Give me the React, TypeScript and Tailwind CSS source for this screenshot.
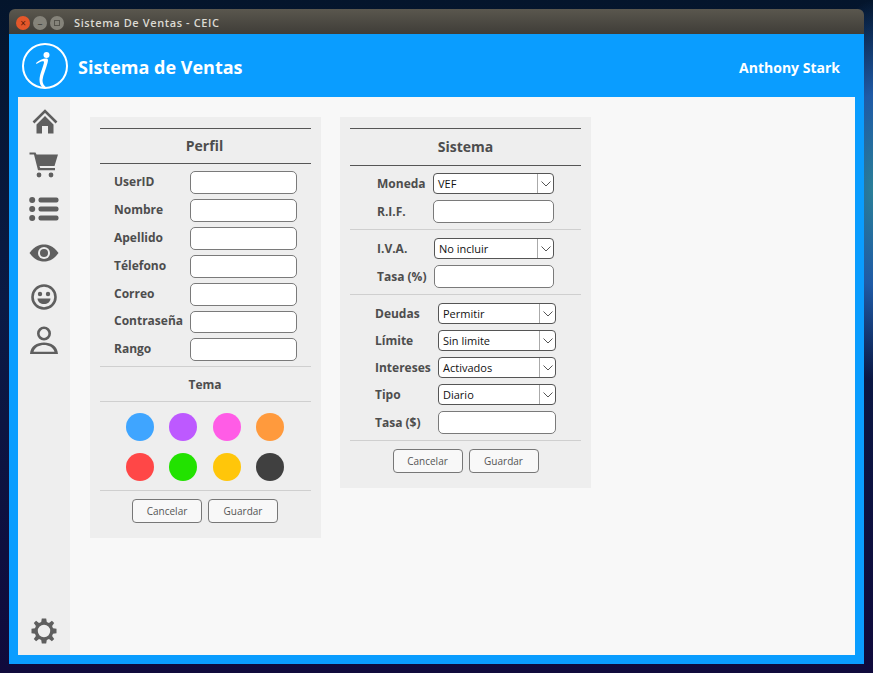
const font = "font-['Open_Sans','Noto_Sans',sans-serif]";

function Chevron() {
  return (
    <svg width="10" height="6" viewBox="0 0 10 6" fill="none" stroke="#555" strokeWidth="1">
      <path d="M0.5 0.5 L5 5 L9.5 0.5" />
    </svg>
  );
}

function Field({ className = "" }: { className?: string }) {
  return <input type="text" className={`rounded-[5px] border border-[#7a7a7a] bg-white ${className}`} />;
}

function Select({ value, className = "" }: { value: string; className?: string }) {
  return (
    <div className={`flex h-[21px] items-stretch rounded-[4px] border border-[#555] bg-white ${className}`}>
      <span className="flex-1 pl-1 text-[11px] leading-[19px] text-[#111]">{value}</span>
      <span className="flex w-4 items-center justify-center border-l border-[#aaa]">
        <Chevron />
      </span>
    </div>
  );
}

function Btn({ label }: { label: string }) {
  return (
    <button className="h-6 w-[70px] rounded-[4px] border border-[#777] bg-[#f8f8f8] pt-[1px] text-[10px] text-[#555]">
      {label}
    </button>
  );
}

function Label({ text, className = "" }: { text: string; className?: string }) {
  return <span className={`text-[12px] font-bold text-[#4d4d4d] ${className}`}>{text}</span>;
}

const perfilRows = ["UserID", "Nombre", "Apellido", "Télefono", "Correo", "Contraseña", "Rango"];
const temas = ["#3fa5ff", "#bd59ff", "#ff5ce6", "#ff9a3d", "#ff4747", "#22e200", "#ffc60a", "#404040"];
const deudas = [
  { label: "Deudas", value: "Permitir" },
  { label: "Límite", value: "Sin limite" },
  { label: "Intereses", value: "Activados" },
  { label: "Tipo", value: "Diario" },
];

function Sidebar() {
  return (
    <aside className="flex w-[52px] shrink-0 flex-col items-center bg-[#eeeeee] pt-[12px] pb-[11px]">
      {/* casa */}
      <svg width="26" height="26" viewBox="0 0 26 26" fill="#5f5f5f" className="ml-[1px]">
        <path d="M1.5 13.5 L13 2 L24.5 13.5" fill="none" stroke="#5f5f5f" strokeWidth="2.6" />
        <path d="M4.5 15.5 L13 7 L21.5 15.5 V24.5 H16 V17 H10 V24.5 H4.5 Z" />
      </svg>
      {/* carrito */}
      <svg width="30" height="26" viewBox="0 0 30 26" fill="#5f5f5f" className="mt-[17px]">
        <path d="M0.5 0.5 H6.5 L7.5 2.5 H29 L25.5 14 H10.5 L11.2 16 H26 V18.2 H9 L5 2.5 H0.5 Z" />
        <circle cx="10" cy="23" r="2.4" />
        <circle cx="22" cy="23" r="2.4" />
      </svg>
      {/* lista */}
      <svg width="30" height="26" viewBox="0 0 30 26" fill="#5f5f5f" className="mt-[18px]">
        <circle cx="3.2" cy="4" r="3" />
        <circle cx="3.2" cy="13" r="3" />
        <circle cx="3.2" cy="22" r="3" />
        <rect x="9.5" y="1.5" width="20" height="5" rx="2" />
        <rect x="9.5" y="10.5" width="20" height="5" rx="2" />
        <rect x="9.5" y="19.5" width="20" height="5" rx="2" />
      </svg>
      {/* ojo */}
      <svg width="30" height="18" viewBox="0 0 30 18" className="mt-[22px]">
        <path d="M0.5 9 C6 1.5 11 0.5 15 0.5 C19 0.5 24 1.5 29.5 9 C24 16.5 19 17.5 15 17.5 C11 17.5 6 16.5 0.5 9 Z" fill="#5f5f5f" />
        <circle cx="15" cy="9" r="6" fill="#eeeeee" />
        <circle cx="15" cy="9" r="4" fill="#5f5f5f" />
      </svg>
      {/* cara */}
      <svg width="26" height="26" viewBox="0 0 26 26" className="mt-[22px]">
        <circle cx="13" cy="13" r="11.5" fill="none" stroke="#5f5f5f" strokeWidth="2.6" />
        <circle cx="9" cy="10" r="2.2" fill="#5f5f5f" />
        <circle cx="17" cy="10" r="2.2" fill="#5f5f5f" />
        <path d="M6.5 14.5 H19.5 C19 18.5 16.5 20 13 20 C9.5 20 7 18.5 6.5 14.5 Z" fill="#5f5f5f" />
      </svg>
      {/* usuario */}
      <svg width="30" height="30" viewBox="0 0 30 30" className="mt-[16px]">
        <circle cx="15" cy="7.5" r="5.7" fill="none" stroke="#5f5f5f" strokeWidth="2.6" />
        <path d="M1 28 C1.5 20 8 16.5 15 16.5 C22 16.5 28.5 20 29 28 Z M4.5 25.7 H25.5 C24 21 19.5 19 15 19 C10.5 19 6 21 4.5 25.7 Z" fill="#5f5f5f" fillRule="evenodd" />
      </svg>
      {/* engranaje */}
      <svg width="26" height="26" viewBox="0 0 26 26" className="mt-auto" fill="#5f5f5f">
        <path
          fillRule="evenodd"
          d="M10.8 0.5 H15.2 L15.8 4 L18 4.9 L20.9 2.8 L23.2 5.1 L21.1 8 L22 10.2 L25.5 10.8 V15.2 L22 15.8 L21.1 18 L23.2 20.9 L20.9 23.2 L18 21.1 L15.8 22 L15.2 25.5 H10.8 L10.2 22 L8 21.1 L5.1 23.2 L2.8 20.9 L4.9 18 L4 15.8 L0.5 15.2 V10.8 L4 10.2 L4.9 8 L2.8 5.1 L5.1 2.8 L8 4.9 L10.2 4 Z M13 6.8 A6.2 6.2 0 1 0 13 19.2 A6.2 6.2 0 1 0 13 6.8 Z"
        />
      </svg>
    </aside>
  );
}

function Perfil() {
  return (
    <section className="h-[421px] w-[231px] shrink-0 bg-[#eeeeee] px-[10px] pt-[11px]">
      <div className="flex h-[36px] items-center justify-center border-y border-[#555] pr-[2px] pb-[2px] text-[14px] font-bold text-[#4d4d4d]">
        Perfil
      </div>
      <div className="flex flex-col gap-[5px] pt-[7px] pb-[5px] pl-[14px] pr-[14px]">
        {perfilRows.map((r) => (
          <div key={r} className="flex items-center justify-between">
            <Label text={r} className="pb-[2px]" />
            <Field className={r === "Contraseña" ? "h-[22px] w-[107px]" : "h-[23px] w-[107px]"} />
          </div>
        ))}
      </div>
      <div className="flex h-[36px] items-center justify-center border-y border-[#cfcfcf] pr-[1px] pt-[1px] text-[12px] font-bold text-[#4d4d4d]">
        Tema
      </div>
      <div className="grid h-[89px] grid-cols-[repeat(4,28px)] content-center justify-between gap-y-[12px] border-b border-[#cfcfcf] pt-[1px] pl-[26px] pr-[27px]">
        {temas.map((c) => (
          <span key={c} className="size-[28px] rounded-full" style={{ backgroundColor: c }} />
        ))}
      </div>
      <div className="flex justify-center gap-[6px] pt-[8px] pr-[1px]">
        <Btn label="Cancelar" />
        <Btn label="Guardar" />
      </div>
    </section>
  );
}

function Sistema() {
  return (
    <section className="h-[371px] w-[251px] shrink-0 bg-[#eeeeee] px-[10px] pt-[11px]">
      <div className="flex h-[38px] items-center justify-center border-y border-[#555] pb-[2px] text-[14px] font-bold text-[#4d4d4d]">
        Sistema
      </div>
      <div className="flex flex-col gap-[6px] border-b border-[#cfcfcf] pt-[7px] pb-[6px] pl-[27px] pr-[27px]">
        <div className="flex items-center justify-between">
          <Label text="Moneda" />
          <Select value="VEF" className="w-[121px]" />
        </div>
        <div className="flex items-center justify-between">
          <Label text="R.I.F." />
          <Field className="h-[23px] w-[121px]" />
        </div>
      </div>
      <div className="flex flex-col gap-[6px] border-b border-[#cfcfcf] pt-[8px] pb-[6px] pl-[27px] pr-[27px]">
        <div className="flex items-center justify-between">
          <Label text="I.V.A." />
          <Select value="No incluir" className="w-[120px]" />
        </div>
        <div className="flex items-center justify-between">
          <Label text="Tasa (%)" />
          <Field className="h-[23px] w-[120px]" />
        </div>
      </div>
      <div className="flex flex-col gap-[6px] border-b border-[#cfcfcf] pt-[8px] pb-[6px] pl-[25px] pr-[25px]">
        {deudas.map((d) => (
          <div key={d.label} className="flex items-center justify-between">
            <Label text={d.label} />
            <Select value={d.value} className="w-[118px]" />
          </div>
        ))}
        <div className="flex items-center justify-between">
          <Label text="Tasa ($)" />
          <Field className="h-[23px] w-[118px]" />
        </div>
      </div>
      <div className="flex justify-center gap-[6px] pt-[8px]">
        <Btn label="Cancelar" />
        <Btn label="Guardar" />
      </div>
    </section>
  );
}

export default function App() {
  return (
    <div className={`h-[673px] w-[873px] overflow-hidden bg-[radial-gradient(ellipse_60px_190px_at_873px_190px,#2a7f98_0%,#1f5aa6_50%,transparent_100%),linear-gradient(180deg,#04152c_0%,#0a1a45_45%,#100a3c_100%)] p-[9px] ${font}`}>
      <div className="flex h-[655px] w-[855px] flex-col">
        {/* barra de titulo */}
        <div className="flex h-[25px] shrink-0 items-center rounded-t-[6px] bg-gradient-to-b from-[#5a574e] to-[#3f3d38] pt-[3px] pl-[7px]">
          <span className="flex size-[14px] items-center justify-center rounded-full bg-[#e4572a] text-[10px] leading-none text-[#5a1c08]">×</span>
          <span className="ml-[3px] flex size-[14px] items-center justify-center rounded-full bg-[#85837a] text-[10px] leading-none text-[#3f3d38]">–</span>
          <span className="ml-[3px] flex size-[14px] items-center justify-center rounded-full bg-[#85837a]">
            <span className="size-[6px] border border-[#55534c]" />
          </span>
          <span className="ml-[10px] text-[11px] font-semibold tracking-[0.6px] text-[#dcdad3]">Sistema De Ventas - CEIC</span>
        </div>

        <div className="flex min-h-0 flex-1 flex-col bg-[#0a9dff] px-[9px] pb-[9px]">
          {/* cabecera */}
          <header className="flex h-[63px] shrink-0 items-center pl-[4px] pr-[15px] text-white">
            <svg width="46" height="46" viewBox="0 0 46 46" fill="none">
              <circle cx="23" cy="23" r="22" stroke="#fff" strokeWidth="2" />
              <circle cx="24.5" cy="12" r="3" fill="#fff" />
              <path d="M14 20 C17 17 22 15 25 15.5 C26.5 16 26 18 25.5 20 C24 26 21 32 20.5 37 C20.3 40 22 43 25 45 L21 45 C18.5 43 17.5 40 17.5 37 C17.5 31 22 22 22 19 C22 18 21 18 20 18.3 C18 19 16 20 14.5 21 Z" fill="#fff" />
            </svg>
            <h1 className="ml-[10px] pt-[4px] text-[18px] font-bold">Sistema de Ventas</h1>
            <span className="ml-auto pt-[4px] text-[14px] font-bold">Anthony Stark</span>
          </header>

          <div className="flex min-h-0 flex-1 bg-[#f8f8f8]">
            <Sidebar />
            <main className="flex items-start gap-[19px] pl-[20px] pt-[20px]">
              <Perfil />
              <Sistema />
            </main>
          </div>
        </div>
      </div>
    </div>
  );
}
